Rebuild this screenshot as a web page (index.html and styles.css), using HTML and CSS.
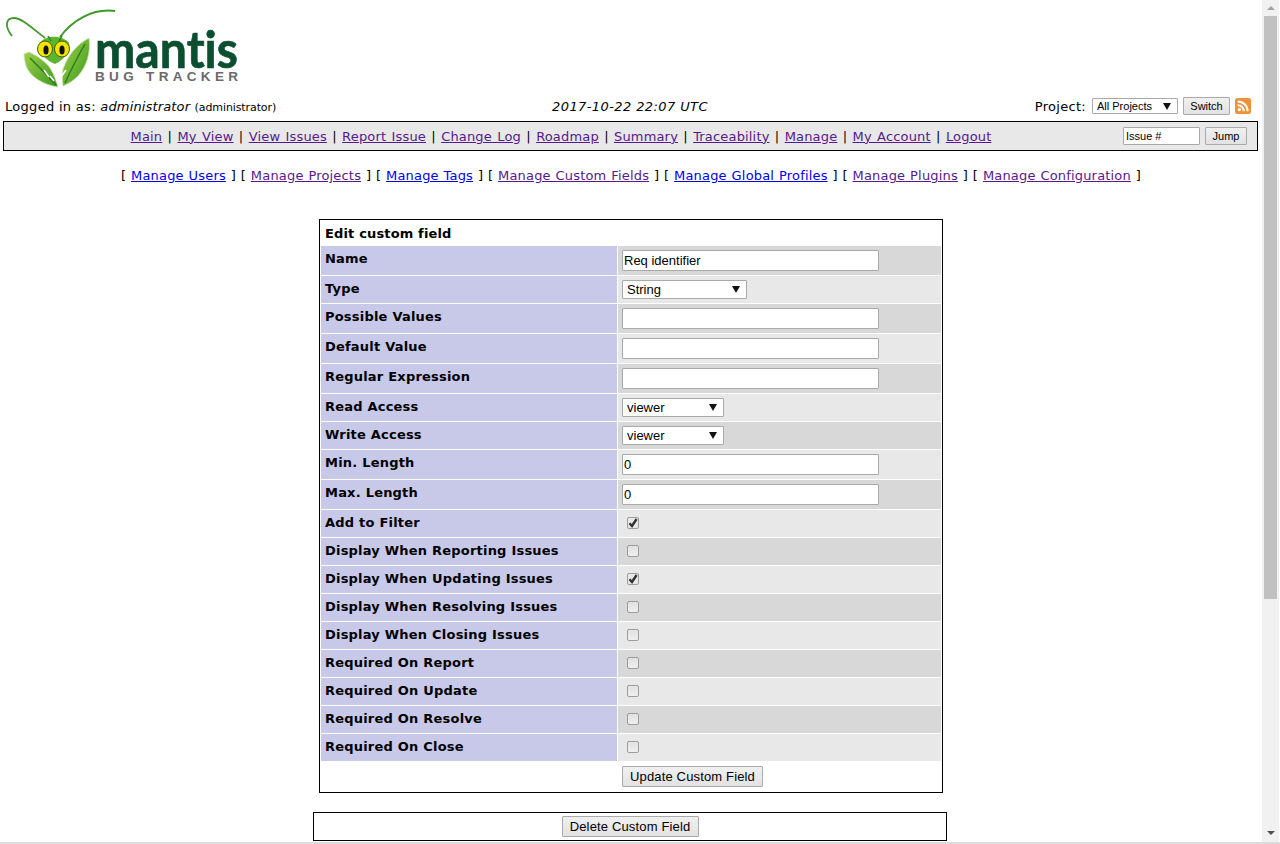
FILE: index.html
```html
<!DOCTYPE html>
<html lang="en">
<head>
    <meta charset="UTF-8">
    <meta name="viewport" content="width=device-width, initial-scale=1.0">
    <title>Edit custom field - MantisBT</title>
    <link rel="stylesheet" href="styles.css">
</head>
<body>
    <div class="window">
        <div class="page">
            <div class="logo-row">
                <svg class="logo" width="240" height="92" viewBox="0 0 240 92">
                    <defs>
                        <linearGradient id="leaf" x1="0" y1="0" x2="1" y2="1">
                            <stop offset="0" stop-color="#9fd04a"/>
                            <stop offset="1" stop-color="#3a9a1e"/>
                        </linearGradient>
                    </defs>
                    <path d="M45 38C33 29 22 18 14 18C6 18 4 26 12 36" fill="none" stroke="#3f9a2a" stroke-width="1.8"/>
                    <path d="M60 37C72 21 92 8 115 11" fill="none" stroke="#3f9a2a" stroke-width="2"/>
                    <path d="M24 54L29 52C38 56 47 63 50 68C54 74 56 81 58 87C44 85 30 77 26 66C25 62 24 58 24 54Z" fill="url(#leaf)" stroke="#cfe3b4" stroke-width="0.8"/>
                    <path d="M89 38C91 52 87 66 78 76C73 81 68 84 63 86C62 80 62 74 63 69C68 55 76 45 89 38Z" fill="url(#leaf)" stroke="#cfe3b4" stroke-width="0.8"/>
                    <path d="M30 58C38 66 48 76 56 85M85 44C78 56 71 70 65 83" fill="none" stroke="#2d7a18" stroke-width="1.4"/>
                    <path d="M44 70L49 77M50 76L54 81M66 70L61 77" stroke="#ffffff" stroke-width="1.6"/>
                    <path d="M39 44C44 35 62 34 69 43C71 50 63 61 55 64C46 61 37 50 39 44Z" fill="#5cb531"/>
                    <path d="M48 36L51 41M62 36L59 41" stroke="#2d7a18" stroke-width="1.4"/>
                    <ellipse cx="45" cy="49" rx="7.5" ry="8" fill="#f4e400" stroke="#40600c"/>
                    <ellipse cx="62" cy="49" rx="7.5" ry="8" fill="#f4e400" stroke="#40600c"/>
                    <ellipse cx="46" cy="50" rx="2.6" ry="4.6" fill="#111111"/>
                    <ellipse cx="62" cy="50" rx="2.6" ry="4.6" fill="#111111"/>
                    <text class="logo-name" x="95" y="68" textLength="143" lengthAdjust="spacingAndGlyphs">mantis</text>
                    <text class="logo-sub" x="95" y="81" textLength="143">BUG TRACKER</text>
                </svg>
            </div>

            <div class="info-row">
                <div class="login-info">Logged in as: <em>administrator</em> <small>(administrator)</small></div>
                <div class="date-info">2017-10-22 22:07 UTC</div>
                <div class="project-info">
                    <span>Project:</span>
                    <select class="small-select"><option>All Projects</option></select>
                    <button class="small-button switch-button">Switch</button>
                    <svg class="rss-icon" width="16" height="16" viewBox="0 0 16 16">
                        <rect width="16" height="16" rx="2.5" fill="#f0913a"/>
                        <circle cx="4.4" cy="11.6" r="1.7" fill="#ffffff"/>
                        <path d="M2.7 7.2A6.1 6.1 0 0 1 8.8 13.3M2.7 3.4A9.9 9.9 0 0 1 12.6 13.3" fill="none" stroke="#ffffff" stroke-width="2"/>
                    </svg>
                </div>
            </div>

            <div class="nav-bar">
                <div class="nav-links">
                    <a class="visited" href="#">Main</a> | <a class="visited" href="#">My View</a> | <a class="visited" href="#">View Issues</a> | <a class="visited" href="#">Report Issue</a> | <a class="visited" href="#">Change Log</a> | <a class="visited" href="#">Roadmap</a> | <a class="visited" href="#">Summary</a> | <a class="visited" href="#">Traceability</a> | <a class="visited" href="#">Manage</a> | <a class="visited" href="#">My Account</a> | <a class="visited" href="#">Logout</a>
                </div>
                <div class="jump-form">
                    <input class="jump-input" type="text" value="Issue #">
                    <button class="small-button jump-button">Jump</button>
                </div>
            </div>

            <div class="sub-menu">
                [ <a href="#">Manage Users</a> ] [ <a class="visited" href="#">Manage Projects</a> ] [ <a href="#">Manage Tags</a> ] [ <a class="visited" href="#">Manage Custom Fields</a> ] [ <a href="#">Manage Global Profiles</a> ] [ <a class="visited" href="#">Manage Plugins</a> ] [ <a class="visited" href="#">Manage Configuration</a> ]
            </div>

            <table class="form-table">
                <colgroup><col class="label-col"><col></colgroup>
                <tr><td class="form-title" colspan="2">Edit custom field</td></tr>
                <tr class="row-1 tall"><td class="category">Name</td><td><input class="text-input" type="text" value="Req identifier"></td></tr>
                <tr class="row-2"><td class="category">Type</td><td><select class="type-select"><option>String</option></select></td></tr>
                <tr class="row-1 tall"><td class="category">Possible Values</td><td><input class="text-input" type="text"></td></tr>
                <tr class="row-2 tall"><td class="category">Default Value</td><td><input class="text-input" type="text"></td></tr>
                <tr class="row-1 tall"><td class="category">Regular Expression</td><td><input class="text-input" type="text"></td></tr>
                <tr class="row-2"><td class="category">Read Access</td><td><select class="access-select"><option>viewer</option></select></td></tr>
                <tr class="row-1"><td class="category">Write Access</td><td><select class="access-select"><option>viewer</option></select></td></tr>
                <tr class="row-2 tall"><td class="category">Min. Length</td><td><input class="text-input" type="text" value="0"></td></tr>
                <tr class="row-1 tall"><td class="category">Max. Length</td><td><input class="text-input" type="text" value="0"></td></tr>
                <tr class="row-2"><td class="category">Add to Filter</td><td><input class="check" type="checkbox" checked></td></tr>
                <tr class="row-1"><td class="category">Display When Reporting Issues</td><td><input class="check" type="checkbox"></td></tr>
                <tr class="row-2"><td class="category">Display When Updating Issues</td><td><input class="check" type="checkbox" checked></td></tr>
                <tr class="row-1"><td class="category">Display When Resolving Issues</td><td><input class="check" type="checkbox"></td></tr>
                <tr class="row-2"><td class="category">Display When Closing Issues</td><td><input class="check" type="checkbox"></td></tr>
                <tr class="row-1"><td class="category">Required On Report</td><td><input class="check" type="checkbox"></td></tr>
                <tr class="row-2"><td class="category">Required On Update</td><td><input class="check" type="checkbox"></td></tr>
                <tr class="row-1"><td class="category">Required On Resolve</td><td><input class="check" type="checkbox"></td></tr>
                <tr class="row-2"><td class="category">Required On Close</td><td><input class="check" type="checkbox"></td></tr>
                <tr class="tall"><td></td><td><button class="form-button update-button">Update Custom Field</button></td></tr>
            </table>

            <div class="delete-box">
                <button class="form-button delete-button">Delete Custom Field</button>
            </div>
        </div>

        <div class="scrollbar">
            <div class="arrow-up"></div>
            <div class="thumb"></div>
            <div class="arrow-down"></div>
        </div>
    </div>
    <div class="bottom-line"></div>
</body>
</html>
```

FILE: styles.css
```css
html, body {
    margin: 0;
    height: 844px;
    overflow: hidden;
    background-color: #ffffff;
}
body {
    font-family: "DejaVu Sans", Verdana, sans-serif;
    font-size: 13px;
    color: #000000;
}
a {
    color: #0000ee;
}
a.visited {
    color: #551a8b;
}
.window {
    display: flex;
    height: 842px;
    overflow: hidden;
}
.page {
    flex: 1;
    min-width: 0;
}
.bottom-line {
    height: 2px;
    background-color: #dcdcdc;
}

/* logo */
.logo-row {
    height: 92px;
}
.logo {
    display: block;
}
.logo-name {
    font-family: Lato, sans-serif;
    font-size: 52px;
    font-weight: 700;
    font-variant-ligatures: none;
    fill: #0b4f30;
    stroke: #0b4f30;
    stroke-width: 0.7px;
}
.logo-sub {
    font-family: "Liberation Sans", sans-serif;
    font-size: 13.5px;
    font-weight: 700;
    fill: #6a6a6a;
}

/* user row */
.info-row {
    display: grid;
    grid-template-columns: 1fr auto 1fr;
    align-items: center;
    height: 29px;
    padding: 0 11px 0 5px;
    letter-spacing: 0.3px;
}
.login-info em {
    letter-spacing: 0.15px;
}
.login-info small {
    font-size: 11px;
    letter-spacing: -0.1px;
}
.date-info {
    font-style: italic;
    letter-spacing: 0.4px;
    padding-left: 4px;
}
.project-info {
    display: flex;
    align-items: center;
    justify-content: flex-end;
    margin-top: -1px;
}
.rss-icon {
    margin-left: 5px;
}

/* form controls */
input, select, button {
    box-sizing: border-box;
    font-family: "Liberation Sans", Arial, sans-serif;
    color: #000000;
    letter-spacing: 0;
    margin: 0;
}
input[type="text"], select {
    background-color: #ffffff;
    border: 1px solid #a9a9a9;
    border-radius: 1px;
}
select {
    appearance: none;
    padding: 0 0 0 4px;
    background-image: url("data:image/svg+xml,%3Csvg xmlns='http://www.w3.org/2000/svg' width='8' height='7'%3E%3Cpath d='M0 0H8L4 7Z' fill='%23111'/%3E%3C/svg%3E");
    background-repeat: no-repeat;
    background-position: right 6px center;
}
button {
    background: linear-gradient(#f0f0f0, #e2e2e2);
    border: 1px solid #aaaaaa;
    border-radius: 1px;
    padding: 0;
}
.small-select {
    width: 86px;
    height: 16px;
    margin-left: 6px;
    font-size: 11px;
}
.small-button {
    height: 18px;
    font-size: 11px;
}
.switch-button {
    width: 47px;
    margin-left: 5px;
}
.jump-button {
    width: 42px;
    margin-left: 5px;
}
.jump-input {
    width: 77px;
    height: 18px;
    padding: 0 2px;
    font-size: 11px;
}

/* nav */
.nav-bar {
    display: flex;
    align-items: center;
    box-sizing: border-box;
    height: 30px;
    width: 1255px;
    margin-left: 3px;
    border: 1px solid #000000;
    background-color: #e8e8e8;
}
.nav-links {
    width: 1114px;
    text-align: center;
    letter-spacing: 0.17px;
    word-spacing: 1px;
}
.jump-form {
    display: flex;
    margin-left: 5px;
}
.sub-menu {
    height: 68px;
    padding-top: 17px;
    box-sizing: border-box;
    text-align: center;
    letter-spacing: 0.18px;
    word-spacing: 0.5px;
}

/* edit form */
.form-table {
    width: 624px;
    margin: 0 auto;
    border: 1px solid #000000;
    border-spacing: 1px;
    table-layout: fixed;
}
.label-col {
    width: 296px;
}
.form-table td {
    box-sizing: border-box;
    height: 27px;
    padding: 4px;
    vertical-align: top;
}
.form-table .tall td {
    height: 29px;
}
.form-table .form-title {
    height: 24px;
    font-weight: bold;
    padding-top: 5px;
    letter-spacing: 0.15px;
}
.form-table .category {
    background-color: #c8c8e8;
    font-weight: bold;
    padding-top: 5px;
    letter-spacing: 0.2px;
    word-spacing: 0.1px;
}
.row-1 td:last-child {
    background-color: #d8d8d8;
}
.row-2 td:last-child {
    background-color: #e8e8e8;
}
.text-input {
    display: block;
    width: 257px;
    height: 21px;
    padding: 0 1px;
    font-size: 13px;
}
.type-select, .access-select {
    display: block;
    height: 19px;
    font-size: 13px;
}
.type-select {
    width: 125px;
}
.access-select {
    width: 102px;
}
.check {
    display: block;
    appearance: none;
    box-sizing: border-box;
    width: 12px;
    height: 12px;
    margin: 3px 0 0 5px;
    background: linear-gradient(#e2e2e2, #eeeeee);
    border: 1px solid #9c9c9c;
    border-radius: 2px;
}
.check:checked {
    background-image: url("data:image/svg+xml,%3Csvg xmlns='http://www.w3.org/2000/svg' width='10' height='10'%3E%3Cpath d='M1.5 5.2L4 8L8.6 1' fill='none' stroke='%23333' stroke-width='2.4'/%3E%3C/svg%3E");
    background-repeat: no-repeat;
    background-position: center;
}
.form-button {
    display: block;
    height: 21px;
    font-size: 13px;
    letter-spacing: 0.15px;
}
.update-button {
    width: 141px;
}
.delete-button {
    width: 137px;
}
.delete-box {
    display: flex;
    justify-content: center;
    box-sizing: border-box;
    width: 634px;
    height: 29px;
    margin: 19px 315px 0 auto;
    padding-top: 3px;
    border: 1px solid #000000;
}

/* scrollbar on the right */
.scrollbar {
    display: flex;
    flex-direction: column;
    align-items: center;
    box-sizing: border-box;
    width: 17px;
    margin-right: 1px;
    background-color: #f1f1f1;
}
.thumb {
    width: 13px;
    height: 583px;
    margin-top: 6px;
    background-color: #c1c1c1;
}
.arrow-up {
    width: 0;
    height: 0;
    margin-top: 6px;
    border-left: 4px solid transparent;
    border-right: 4px solid transparent;
    border-bottom: 4px solid #a3a3a3;
}
.arrow-down {
    width: 0;
    height: 0;
    margin-top: auto;
    margin-bottom: 7px;
    border-left: 4px solid transparent;
    border-right: 4px solid transparent;
    border-top: 4px solid #505050;
}
```
